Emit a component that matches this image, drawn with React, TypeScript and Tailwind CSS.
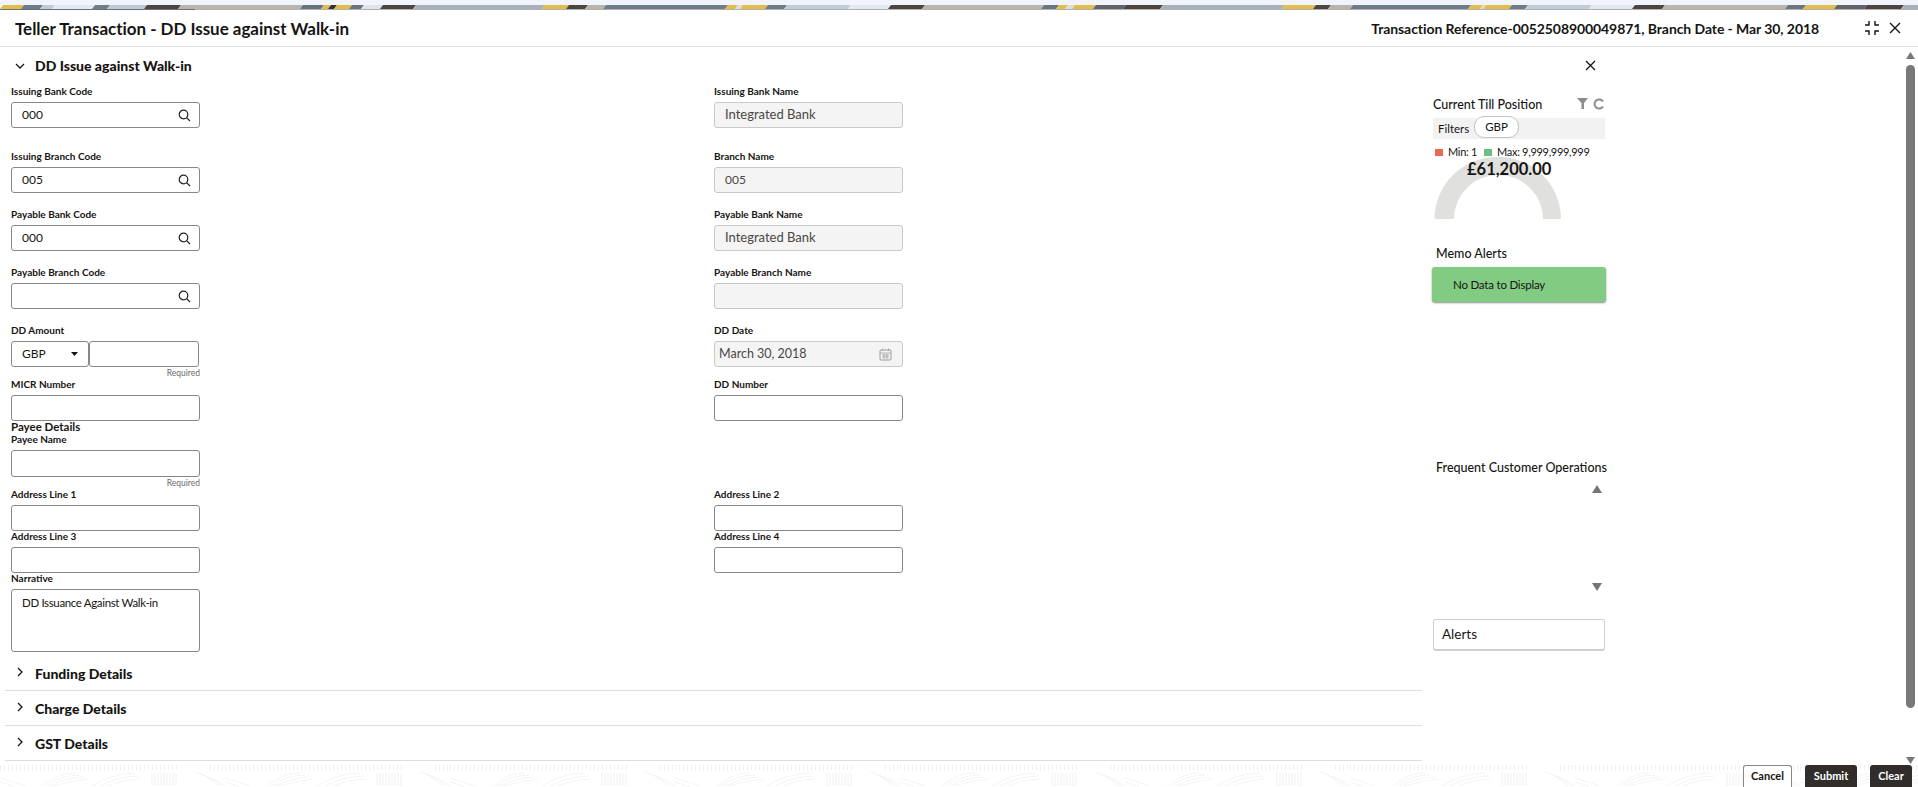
import React from "react";

const font = "font-['Lato',sans-serif]";

function SearchIcon() {
  return (
    <svg width="13" height="13" viewBox="0 0 13 13" fill="none" stroke="#222" strokeWidth="1.2">
      <circle cx="5.5" cy="5.5" r="4.3" />
      <path d="M8.6 8.6 L12 12" />
    </svg>
  );
}

function Label({ children }: { children: React.ReactNode }) {
  return <div className="h-[14px] text-[10px] leading-[14px] font-bold text-[#161513] whitespace-nowrap">{children}</div>;
}

function Box({ children, disabled, h = "h-[26px]" }: { children?: React.ReactNode; disabled?: boolean; h?: string }) {
  return (
    <div
      className={`${h} w-[189px] rounded-[3px] border flex items-center text-[13px] ${
        disabled ? "border-[#c9c9c7] bg-[#f4f4f4] text-[#4a4743]" : "border-[#8a8785] bg-white text-[#161513]"
      }`}
    >
      {children}
    </div>
  );
}

function Field({ label, value, search, disabled, h }: { label: string; value?: string; search?: boolean; disabled?: boolean; h?: string }) {
  const digits = value !== undefined && /^\d+$/.test(value);
  return (
    <div>
      <Label>{label}</Label>
      <div className="mt-[4px]">
        <Box disabled={disabled} h={h}>
          <span className={`pl-[10px] flex-1 ${digits ? "text-[12px]" : ""}`}>{value}</span>
          {search && (
            <span className="pr-[8px] flex">
              <SearchIcon />
            </span>
          )}
        </Box>
      </div>
    </div>
  );
}

function Accordion({ title }: { title: string }) {
  return (
    <div className="h-[35px] ml-[5px] border-b border-[#dfdfdd] flex items-center">
      <svg width="10" height="10" viewBox="0 0 10 10" fill="none" stroke="#161513" strokeWidth="1.3" className="ml-[10px] mb-[2px]">
        <path d="M3 1 L7 5 L3 9" />
      </svg>
      <span className="ml-[10px] text-[14px] font-black text-[#161513]">{title}</span>
    </div>
  );
}

function Pattern() {
  return (
    <svg width="100%" height="23" className="absolute left-0 bottom-0">
      <defs>
        <pattern id="wave" width="225" height="23" patternUnits="userSpaceOnUse">
          <path d="M0 3.5 H178 M210 3.5 H225" stroke="#f0f0f0" strokeWidth="5" strokeDasharray="1 3" fill="none" />
          <path d="M0 14 Q14 18 25 22 M0 18 Q8 20 14 23" stroke="#f4f4f4" fill="none" />
          <path d="M42 22 Q60 8 75 9 M46 22 Q62 11 80 11 M50 22 Q66 14 84 13 M54 22 Q70 17 88 15" stroke="#f4f4f4" fill="none" />
          <path d="M92 22 Q110 10 135 9 M100 22 Q116 13 138 12 M108 22 Q122 16 140 15" stroke="#f4f4f4" fill="none" />
          <path d="M152 9 V22 M155 9 V22 M158 9 V22 M161 9 V22 M164 9 V22 M167 9 V22 M170 9 V22 M173 9 V22 M176 9 V22" stroke="#f1f1f1" fill="none" />
          <path d="M195 8 Q215 14 225 22 M200 10 Q214 15 222 22 M205 12 Q212 17 218 22" stroke="#f4f4f4" fill="none" />
        </pattern>
      </defs>
      <rect width="100%" height="23" fill="url(#wave)" />
    </svg>
  );
}

const strip: [number, number, string][] = [
  [0, 21, "#e3bd4c"], [21, 40, "#6f7b84"], [40, 52, "#c3ccd6"], [52, 92, "#e3e9f3"], [92, 107, "#727d85"], [107, 144, "#c0c8d2"],
  [144, 178, "#4d4640"], [178, 300, "#bab5aa"], [300, 321, "#68747c"], [321, 328, "#e3bd4c"], [328, 334, "#33322f"], [334, 349, "#e3bd4c"],
  [349, 361, "#6a757d"], [361, 380, "#dfe3ea"], [380, 413, "#4d4640"], [413, 542, "#a8b0ba"], [542, 566, "#e3bd4c"], [566, 585, "#4a4540"],
  [585, 603, "#bab5aa"], [603, 725, "#717d86"], [725, 735, "#e3bd4c"], [735, 740, "#dcdcd8"], [740, 765, "#e3bd4c"], [765, 784, "#6f7b84"],
  [784, 848, "#c3ccd6"], [848, 888, "#e3e9f3"], [888, 922, "#4d4640"], [922, 1041, "#bab5aa"], [1041, 1056, "#6a757d"], [1056, 1065, "#e3bd4c"],
  [1065, 1072, "#dcdcd8"], [1072, 1093, "#e3bd4c"], [1093, 1123, "#5f6569"], [1123, 1160, "#4d4640"], [1160, 1282, "#a8b0ba"], [1282, 1313, "#e3bd4c"],
  [1313, 1328, "#4a4540"], [1328, 1350, "#bab5aa"], [1350, 1468, "#717d86"], [1468, 1480, "#e3bd4c"], [1480, 1483, "#dcdcd8"], [1483, 1509, "#e3bd4c"],
  [1509, 1525, "#6f7b84"], [1525, 1589, "#c3ccd6"], [1589, 1632, "#e3e9f3"], [1632, 1662, "#4d4640"], [1662, 1785, "#bab5aa"], [1785, 1803, "#6a757d"],
  [1803, 1834, "#e3bd4c"], [1834, 1864, "#5f6569"], [1864, 1901, "#4d4640"], [1901, 1918, "#a8b0ba"],
];

export default function App() {
  return (
    <div className={`${font} relative w-[1918px] h-[787px] overflow-hidden bg-white flex flex-col text-[#161513]`}>
      <div className="h-[5px] bg-[#f1f4fc]" />
      <svg width="1918" height="4" viewBox="0 0 1918 4" className="block shrink-0">
        {strip.map(([a, b, c], i) => (
          <polygon key={i} points={`${a},4 ${b},4 ${b + 3},0 ${a + 3},0`} fill={c} />
        ))}
      </svg>
      <div className="h-[1px] flex">
        <div className="w-[195px] bg-[#6b7080]" />
        <div className="flex-1 bg-[#b0b0b0]" />
      </div>

      <header className="h-[37px] shrink-0 border-b border-[#e3e3e1] flex items-center">
        <h1 className="ml-[15px] text-[17px] font-bold leading-none flex-1 tracking-[-0.03px]">Teller Transaction - DD Issue against Walk-in</h1>
        <div className="text-[14px] font-bold tracking-[-0.08px]">Transaction Reference-0052508900049871, Branch Date - Mar 30, 2018</div>
        <svg width="16" height="16" viewBox="0 0 16 16" stroke="#161513" strokeWidth="1.4" fill="none" className="ml-[45px]">
          <path d="M5 1 V5 H1 M11 1 V5 H15 M5 15 V11 H1 M11 15 V11 H15" />
        </svg>
        <svg width="12" height="12" viewBox="0 0 12 12" stroke="#161513" strokeWidth="1.4" fill="none" className="ml-[9px] mr-[17px]">
          <path d="M1 1 L11 11 M11 1 L1 11" />
        </svg>
      </header>

      <div className="flex flex-1 min-h-0 relative">
        <main className="w-[1422px] shrink-0">
          <div className="h-[37px] flex items-center">
            <svg width="10" height="10" viewBox="0 0 10 10" fill="none" stroke="#161513" strokeWidth="1.3" className="ml-[15px]">
              <path d="M1 3 L5 7 L9 3" />
            </svg>
            <span className="ml-[10px] text-[14px] font-black">DD Issue against Walk-in</span>
          </div>
          <div className="pl-[11px]">
            <div className="h-[65px] grid grid-cols-[703px_189px]">
              <Field label="Issuing Bank Code" value="000" search />
              <Field label="Issuing Bank Name" value="Integrated Bank" disabled />
            </div>
            <div className="h-[58px] grid grid-cols-[703px_189px]">
              <Field label="Issuing Branch Code" value="005" search />
              <Field label="Branch Name" value="005" disabled />
            </div>
            <div className="h-[58px] grid grid-cols-[703px_189px]">
              <Field label="Payable Bank Code" value="000" search />
              <Field label="Payable Bank Name" value="Integrated Bank" disabled />
            </div>
            <div className="h-[58px] grid grid-cols-[703px_189px]">
              <Field label="Payable Branch Code" search />
              <Field label="Payable Branch Name" disabled />
            </div>
            <div className="h-[54px] grid grid-cols-[703px_189px]">
              <div>
                <Label>DD Amount</Label>
                <div className="mt-[4px] w-[189px] flex h-[26px] text-[12px]">
                  <div className="w-[78px] rounded-[3px] border border-[#8a8785] flex items-center pl-[10px]">
                    GBP
                    <svg width="7" height="4" viewBox="0 0 7 4" className="ml-[25px] mb-[1px]">
                      <path d="M0 0 H7 L3.5 4 Z" fill="#161513" />
                    </svg>
                  </div>
                  <div className="w-[110px] rounded-[3px] border border-[#8a8785]" />
                </div>
                <div className="w-[189px] text-right text-[8.5px] leading-[12px] text-[#6b6966]">Required</div>
              </div>
              <div>
                <Label>DD Date</Label>
                <div className="mt-[4px]">
                  <Box disabled>
                    <span className="pl-[4px] flex-1 text-[12.5px]">March 30, 2018</span>
                    <svg width="13" height="13" viewBox="0 0 13 13" fill="none" stroke="#9a9a98" className="mr-[10px]">
                      <rect x="1" y="2" width="11" height="10" rx="1" />
                      <path d="M1 5 H12 M3.5 0.5 V3 M9.5 0.5 V3 M3 7 H10 M3 9 H10 M5 6 V11 M8 6 V11" strokeWidth="0.7" />
                    </svg>
                  </Box>
                </div>
              </div>
            </div>
            <div className="h-[43px] grid grid-cols-[703px_189px]">
              <Field label="MICR Number" />
              <Field label="DD Number" />
            </div>
            <div className="h-[12px] text-[11.5px] leading-[14px] font-bold whitespace-nowrap">Payee Details</div>
            <div className="h-[55px]">
              <Field label="Payee Name" h="h-[27px]" />
              <div className="w-[189px] text-right text-[8.5px] leading-[12px] text-[#6b6966]">Required</div>
            </div>
            <div className="h-[42px] grid grid-cols-[703px_189px]">
              <Field label="Address Line 1" />
              <Field label="Address Line 2" />
            </div>
            <div className="h-[42px] grid grid-cols-[703px_189px]">
              <Field label="Address Line 3" />
              <Field label="Address Line 4" />
            </div>
            <div className="h-[81px]">
              <Label>Narrative</Label>
              <div className="mt-[4px] h-[63px] w-[189px] rounded-[3px] border border-[#8a8785] pl-[10px] pt-[5px] text-[11.5px] tracking-[-0.35px] leading-[16px]">
                DD Issuance Against Walk-in
              </div>
            </div>
          </div>
          <div className="mt-[4px]">
            <Accordion title="Funding Details" />
            <Accordion title="Charge Details" />
            <Accordion title="GST Details" />
          </div>
        </main>

        <aside className="w-[184px] shrink-0 pl-[11px]">
          <div className="flex justify-end pr-[10px] pt-[13px]">
            <svg width="11" height="11" viewBox="0 0 11 11" stroke="#161513" strokeWidth="1.3" fill="none">
              <path d="M1 1 L10 10 M10 1 L1 10" />
            </svg>
          </div>
          <div className="mt-[26px] flex items-center h-[16px] w-[172px]">
            <span className="text-[12.5px] font-medium flex-1">Current Till Position</span>
            <svg width="11" height="11" viewBox="0 0 11 11" className="mb-[3px]">
              <path d="M0 0 H11 L7 5 V11 H4.5 V5 Z" fill="#8c8c8c" />
            </svg>
            <svg width="12" height="12" viewBox="0 0 12 12" fill="none" stroke="#8c8c8c" strokeWidth="2" className="ml-[5px] mb-[3px]">
              <path d="M10 3.5 A4.6 4.6 0 1 0 10 8.5" />
            </svg>
          </div>
          <div className="mt-[5px] w-[172px] h-[21px] bg-[#f2f2f2] flex items-center pl-[5px] text-[11.5px] relative">
            Filters
            <span className="absolute left-[41px] -top-[2px] w-[45px] h-[22px] rounded-[10px] border border-[#c4c4c2] bg-white flex items-center justify-center">GBP</span>
          </div>
          <div className="mt-[6px] flex items-center h-[14px] text-[11px] tracking-[-0.3px] pl-[2px] whitespace-nowrap">
            <span className="w-[8px] h-[7px] bg-[#ea6a4f]" />
            <span className="ml-[5px]">Min: 1</span>
            <span className="ml-[7px] w-[8px] h-[7px] bg-[#69c07f]" />
            <span className="ml-[5px]">Max: 9,999,999,999</span>
          </div>
          <div className="relative h-[62px] w-[172px] -mt-[2px]">
            <svg width="128" height="62" viewBox="0 0 128 62" className="absolute left-[1px] top-0">
              <path d="M0.5 62 A63 62 0 0 1 127 62 H109 A44.5 44 0 0 0 20 62 Z" fill="#e0e0de" />
            </svg>
            <div className="absolute left-[34px] top-0 text-[16.5px] leading-[24px] font-bold whitespace-nowrap">£61,200.00</div>
          </div>
          <div className="mt-[26px] pl-[3px] text-[12.5px] leading-[18px] font-medium">Memo Alerts</div>
          <div className="mt-[4px] w-[174px] h-[35px] rounded-[3px] bg-[#82cb82] shadow-[0_1px_2px_rgba(0,0,0,0.45)] flex items-center pl-[21px] text-[11.5px] tracking-[-0.2px] -ml-[1px]">
            No Data to Display
          </div>
          <div className="mt-[157px] pl-[3px] text-[12.5px] leading-[18px] font-medium whitespace-nowrap">Frequent Customer Operations</div>
          <div className="w-[172px] flex justify-end pr-[3px] mt-[8px]">
            <svg width="10" height="8" viewBox="0 0 10 8"><path d="M5 0 L10 8 H0 Z" fill="#757575" /></svg>
          </div>
          <div className="w-[172px] flex justify-end pr-[3px] mt-[90px]">
            <svg width="10" height="8" viewBox="0 0 10 8"><path d="M5 8 L10 0 H0 Z" fill="#757575" /></svg>
          </div>
          <div className="mt-[28px] w-[172px] h-[32px] rounded-[3px] border border-[#cfcfcd] border-b-2 flex items-center pl-[8px] text-[13.5px]">Alerts</div>
        </aside>
      </div>

      <footer className="h-[25px] shrink-0 relative flex justify-end items-end">
        <Pattern />
        <div className="relative flex h-[22px] text-[11px] font-bold pr-[6px]">
          <div className="w-[49px] rounded-t-[3px] border border-b-0 border-[#8a8785] bg-white flex items-center justify-center">Cancel</div>
          <div className="ml-[13px] w-[52px] rounded-t-[3px] bg-[#312d2a] text-white flex items-center justify-center">Submit</div>
          <div className="ml-[13px] w-[42px] rounded-t-[3px] bg-[#312d2a] text-white flex items-center justify-center">Clear</div>
        </div>
      </footer>

      <div className="absolute left-[1906px] top-[52px] w-[9px] h-[712px] flex flex-col items-center">
        <svg width="9" height="7" viewBox="0 0 9 7"><path d="M4.5 0 L9 7 H0 Z" fill="#787878" /></svg>
        <div className="mt-[6px] w-[9px] h-[643px] rounded-full bg-[#787878]" />
        <div className="flex-1" />
        <svg width="9" height="7" viewBox="0 0 9 7"><path d="M4.5 7 L9 0 H0 Z" fill="#787878" /></svg>
      </div>
    </div>
  );
}
